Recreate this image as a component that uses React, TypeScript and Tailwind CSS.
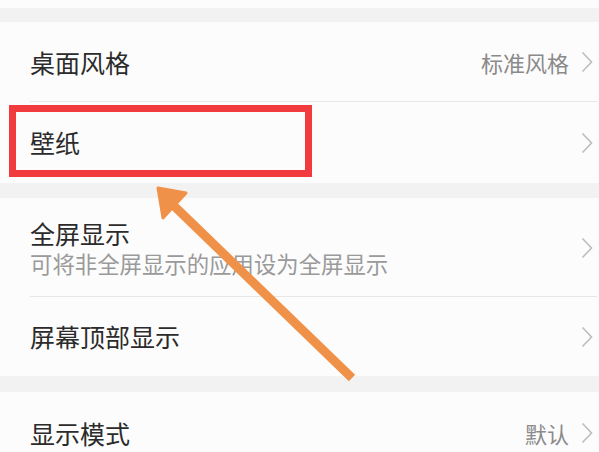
import React from 'react';

const font = { fontFamily: '"Noto Sans CJK SC", "Noto Sans", sans-serif' };

const Chevron = () => (
	<svg width="12" height="22" viewBox="0 0 12 22" className="shrink-0">
		<path d="M1.5 1.5 L10.5 11 L1.5 20.5" fill="none" stroke="#bdbdbd" strokeWidth="1.6" />
	</svg>
);

interface RowProps {
	title: string;
	value?: string;
	sub?: string;
	h: string;
	divider?: boolean;
}

const Row: React.FC<RowProps> = ({ title, value, sub, h, divider }) => (
	<div className={`relative flex items-center pl-[30px] pr-[6px] bg-[#fcfcfc] ${h}`}>
		<div className="flex-1 flex flex-col gap-[2px]">
			<span className="text-[25px] leading-[29px] text-[#2b2b2b]">{title}</span>
			{sub && <span className="text-[22.4px] leading-[27px] text-[#9a9a9a]">{sub}</span>}
		</div>
		{value && <span className="text-[22px] text-[#8a8a8a] mr-[12px]">{value}</span>}
		<Chevron />
		{divider && <div className="absolute left-[30px] right-[2px] bottom-0 h-px bg-[#e6e6e6]" />}
	</div>
);

const Gap = ({ h }: { h: string }) => <div className={`bg-[#f2f2f2] ${h}`} />;

export default function App() {
	return (
		<div className="relative w-[599px] h-[452px] overflow-hidden bg-[#fcfcfc]" style={font}>
			<div className="h-[8px] bg-[#fcfcfc]" />
			<Gap h="h-[14px]" />
			<Row title="桌面风格" value="标准风格" h="h-[80px]" divider />
			<Row title="壁纸" h="h-[81px]" />
			<Gap h="h-[15px]" />
			<Row title="全屏显示" sub="可将非全屏显示的应用设为全屏显示" h="h-[99px]" divider />
			<Row title="屏幕顶部显示" h="h-[79px]" />
			<Gap h="h-[16px]" />
			<Row title="显示模式" value="默认" h="h-[82px]" />

			{/* annotation: red box */}
			<div className="absolute left-[9px] top-[105px] w-[303px] h-[72px] border-[7px] border-[#f23b3e]" />

			{/* annotation: arrow */}
			<svg className="absolute left-0 top-0" width="599" height="452" viewBox="0 0 599 452">
				<line x1="352" y1="378" x2="170" y2="202" stroke="#f0914a" strokeWidth="9" />
				<polygon points="158,188 186,193 163,218" fill="#f0914a" stroke="#f0914a" strokeWidth="3" strokeLinejoin="round" />
			</svg>
		</div>
	);
}
